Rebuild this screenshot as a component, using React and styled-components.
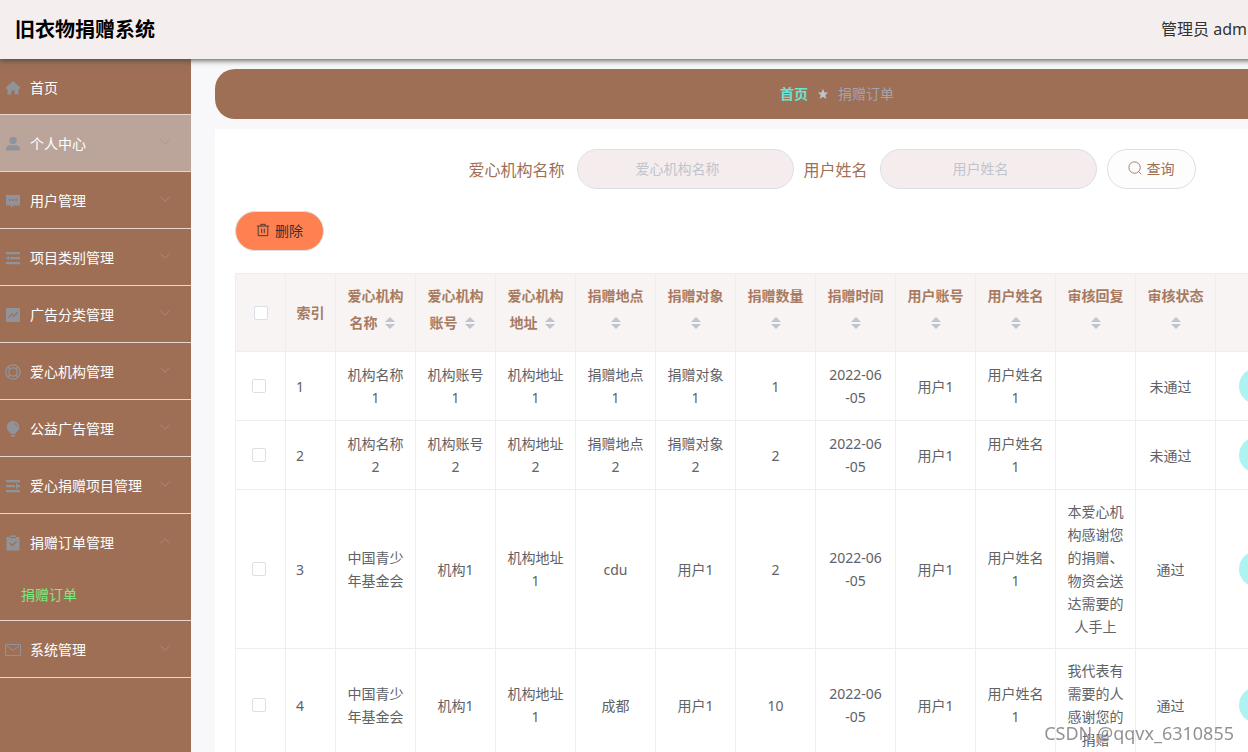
import React from 'react';
import styled, { createGlobalStyle, css } from 'styled-components';

const Global = createGlobalStyle`
  * { box-sizing: border-box; }
  html, body { margin: 0; overflow: hidden; }
  body {
    font-family: "Noto Sans", "Noto Sans CJK SC", sans-serif;
    font-size: 14px;
    color: #606266;
    background: #f8f8fa;
  }
  button, input { font: inherit; }
`;

const Page = styled.div`
  min-width: 1483px;
  height: 100vh;
  display: flex;
  flex-direction: column;
`;

const Header = styled.header`
  position: relative;
  flex: none;
  height: 59px;
  padding: 0 222px 0 15px;
  display: flex;
  align-items: center;
  justify-content: space-between;
  background: #f4eeee;
  box-shadow: 0 1px 6px #444;
`;

const Title = styled.h1`
  margin: 0;
  font-size: 20px;
  line-height: 30px;
  font-weight: 700;
  color: #000;
`;

const Account = styled.div`
  padding-bottom: 3px;
  font-size: 16px;
  color: #333;
`;

const Body = styled.div`
  flex: 1;
  min-height: 0;
  display: flex;
`;

const Sidebar = styled.nav`
  flex: none;
  width: 191px;
  background: #9e6f55;
`;

const Menu = styled.ul`
  margin: 0;
  padding: 0;
  list-style: none;
`;

const MenuItem = styled.li`
  border-bottom: 1px solid #e6d6cd;
`;

const MenuButton = styled.button`
  width: 100%;
  height: ${(p) => (p.$first ? 55 : 56)}px;
  padding: 0 20px 0 5px;
  border: 0;
  display: flex;
  align-items: center;
  gap: 9px;
  text-align: left;
  color: #fff;
  background: ${(p) => (p.$active ? '#bba59b' : 'transparent')};
  > span { flex: 1; }
  > svg:first-child { margin-top: 2px; }
  > svg:last-child { margin-bottom: 3px; }
`;

const SubLink = styled.a`
  display: block;
  height: 50px;
  line-height: 50px;
  padding-left: 21px;
  color: #7fe87f;
  text-decoration: none;
`;

const Icon = styled.svg`
  flex: none;
  display: block;
  width: ${(p) => p.$size || 16}px;
  height: ${(p) => p.$size || 16}px;
  color: ${(p) => p.$color || '#909399'};
`;

const Main = styled.main`
  flex: 1;
  min-width: 0;
  padding: 10px 24px 0;
  overflow: hidden;
`;

const Breadcrumb = styled.nav`
  height: 50px;
  padding-bottom: 2px;
  border-radius: 20px;
  display: flex;
  align-items: center;
  justify-content: center;
  gap: 9px;
  background: #9e6f55;
  color: #a2a3ad;
  > svg { margin-top: 2px; }
`;

const HomeLink = styled.a`
  font-weight: 700;
  color: #68e4d6;
  text-decoration: none;
`;

const Panel = styled.section`
  margin-top: 10px;
  padding: 20px;
  background: #fff;
`;

const SearchForm = styled.form`
  display: flex;
  align-items: center;
  justify-content: center;
  gap: 10px;
  padding-right: 10px;
`;

const Field = styled.label`
  display: flex;
  align-items: center;
  gap: 12px;
  font-size: 16px;
  color: #9e6f55;
`;

const TextInput = styled.input`
  width: 217px;
  height: 40px;
  padding: 0 30px 2px 15px;
  border: 1px solid #dcdfe6;
  border-radius: 20px;
  background: #f5eded;
  font-size: 14px;
  text-align: center;
  outline: 0;
  &::placeholder { color: #c0c4cc; }
`;

const PillButton = styled.button`
  height: 40px;
  padding: 0 20px 2px;
  border: 1px solid #dcdfe6;
  border-radius: 20px;
  display: inline-flex;
  align-items: center;
  gap: 5px;
  color: #9e6f55;
  background: #fdfdfd;
  ${(p) => p.$danger && css`
    color: #333;
    background: #ff8050;
  `}
`;

const Toolbar = styled.div`
  display: flex;
  padding: 22px 0;
`;

const Table = styled.table`
  width: 100%;
  table-layout: fixed;
  border-collapse: collapse;
  line-height: 23px;
  text-align: center;
`;

const HeadCell = styled.th`
  padding: 10px;
  border: 1px solid #ebeef5;
  background: #f7f4f3;
  color: #a77a62;
  font-weight: 700;
  word-break: break-all;
`;

const Cell = styled.td`
  height: 69px;
  padding: 10px ${(p) => p.$right || 10}px 10px 10px;
  border: 1px solid #ebeef5;
  background: #fff;
  text-align: ${(p) => p.$align || 'center'};
  white-space: pre-line;
  word-break: break-all;
`;

const Check = styled.input`
  appearance: none;
  display: block;
  width: 14px;
  height: 14px;
  margin: 0 auto;
  border: 1px solid #dcdfe6;
  border-radius: 2px;
  background: #fff;
`;

const SortButton = styled.button`
  display: inline-flex;
  flex-direction: column;
  align-items: center;
  justify-content: center;
  gap: 2px;
  width: 24px;
  height: 34px;
  padding: 0 0 2px;
  border: 0;
  background: none;
  vertical-align: middle;
  &::before, &::after {
    content: "";
    border: 5px solid transparent;
  }
  &::before { border-top: 0; border-bottom-color: #c0c4cc; }
  &::after { border-bottom: 0; border-top-color: #c0c4cc; }
`;

const RowAction = styled.button`
  display: block;
  width: 84px;
  height: 36px;
  margin-left: 13px;
  padding: 0;
  border: 0;
  border-radius: 18px;
  background: #aef3f1;
  color: #333;
`;

const Watermark = styled.div`
  position: fixed;
  right: 14px;
  bottom: 7px;
  font: 18px/24px "Noto Sans", sans-serif;
  color: rgba(110, 110, 110, 0.75);
  text-shadow: 1px 1px 1px #fff;
`;

const glyphs = {
  home: <path fill="currentColor" d="M8 1 .5 7.800l1 1.200H2.500v5.500h3.800V10.500h3.400v4h3.800V9h1l1-1.200z" />,
  user: <g fill="currentColor"><circle cx="8" cy="4.500" r="3.700" /><path d="M1.200 14.500v-2C1.200 10.500 3 9.300 5 9.300h6c2 0 3.800 1.200 3.800 3.200v2z" /></g>,
  comment: <path fill="currentColor" fillRule="evenodd" d="M1 2h14v10.500H8.500L6 15v-2.500H1zM4 6v2h1.500V6zm3.200 0v2h1.600V6zm3.300 0v2H12V6z" />,
  fold: <path fill="currentColor" d="M1 2h14v2.300H1zM5 7h10v2.200H5zM1 12h14v2.300H1zM1 8l3-2.200v4.400z" />,
  marketing: <path fill="currentColor" fillRule="evenodd" d="M2 1h12q1 0 1 1v12q0 1-1 1H2q-1 0-1-1V2q0-1 1-1zM3 10.200l1 .8 3-3 2 2 4-4.500-.8-.8L9 8.300l-2-2z" />,
  help: <g fill="none" stroke="currentColor" strokeWidth="1.300"><circle cx="8" cy="8" r="7.200" /><circle cx="8" cy="8" r="4.200" /><path d="m3 3 2.200 2.200M13 3l-2.200 2.200M3 13l2.200-2.200M13 13l-2.200-2.200" /></g>,
  bulb: <g fill="currentColor"><path d="M8 0a6.200 6.200 0 0 0-6.200 6.200c0 2.500 1.500 4.500 3.700 5.800v1h5v-1c2.200-1.300 3.700-3.300 3.700-5.800A6.200 6.200 0 0 0 8 0z" /><path d="M5.800 14h4.400v1.500H5.800z" /><path d="M9 2.500q2.500.500 3 3" fill="none" stroke="#9e6f55" /></g>,
  operation: <path fill="currentColor" d="M1 2h14v2.300H1zM1 7h9v2.200H1zM1 12h14v2.300H1zM11 5.500h1.500V7H15v2.200h-2.500v1.500H11z" />,
  claim: <path fill="currentColor" fillRule="evenodd" d="M1.500 2H5V.5h6V2h3.500v13.500h-13zM5 2v1.300h6V2zM4.300 8.500l3 3L12 7l-1-1-3.700 3.500-2-2z" />,
  message: <g fill="none" stroke="currentColor"><path d="M.5 2.500h15v11H.5z" /><path d="m2 4 6 4.500L14 4" /></g>,
  star: <path fill="currentColor" d="m8 1 2 5h5l-4 3.400 1.500 5.200L8 11.600l-4.500 3L5 9.400 1 6h5z" />,
  search: <g fill="none" stroke="currentColor"><circle cx="7.500" cy="7.500" r="6.500" /><path d="m12.200 12.200 2.800 2.800" /></g>,
  trash: <path fill="none" stroke="currentColor" d="M1 3.500h14M5.500 3.500v-2h5v2M2.500 3.500v11h11v-11M6.500 6.500v5M9.500 6.500v5" />,
  down: <path fill="none" stroke="currentColor" strokeWidth="1.300" d="m2 5 6 6 6-6" />,
  up: <path fill="none" stroke="currentColor" strokeWidth="1.300" d="m2 11 6-6 6 6" />,
};

const Glyph = ({ name, size, color }) => (
  <Icon viewBox="0 0 16 16" $size={size} $color={color} aria-hidden="true">{glyphs[name]}</Icon>
);

const menu = [
  ['首页', 'home'],
  ['个人中心', 'user'],
  ['用户管理', 'comment'],
  ['项目类别管理', 'fold'],
  ['广告分类管理', 'marketing'],
  ['爱心机构管理', 'help'],
  ['公益广告管理', 'bulb'],
  ['爱心捐赠项目管理', 'operation'],
  ['捐赠订单管理', 'claim', '捐赠订单'],
  ['系统管理', 'message'],
];

const columns = ['爱心机构名称', '爱心机构账号', '爱心机构地址', '捐赠地点', '捐赠对象', '捐赠数量', '捐赠时间', '用户账号', '用户姓名', '审核回复', '审核状态'];

const orders = [
  ['机构名称1', '机构账号1', '机构地址1', '捐赠地点1', '捐赠对象1', '1', '2022-06\n-05', '用户1', '用户姓名1', '', '未通过'],
  ['机构名称2', '机构账号2', '机构地址2', '捐赠地点2', '捐赠对象2', '2', '2022-06\n-05', '用户1', '用户姓名1', '', '未通过'],
  ['中国青少年基金会', '机构1', '机构地址1', 'cdu', '用户1', '2', '2022-06\n-05', '用户1', '用户姓名1', '本爱心机构感谢您的捐赠、物资会送达需要的人手上', '通过'],
  ['中国青少年基金会', '机构1', '机构地址1', '成都', '用户1', '10', '2022-06\n-05', '用户1', '用户姓名1', '我代表有需要的人感谢您的捐赠', '通过'],
];

export default function App() {
  return (
    <>
      <Global />
      <Page>
        <Header>
          <Title>旧衣物捐赠系统</Title>
          <Account>管理员 admin</Account>
        </Header>
        <Body>
          <Sidebar>
            <Menu>
              {menu.map(([label, icon, sub], i) => (
                <MenuItem key={label}>
                  <MenuButton type="button" $first={i === 0} $active={i === 1}>
                    <Glyph name={icon} />
                    <span>{label}</span>
                    {i > 0 && <Glyph name={sub ? 'up' : 'down'} size={12} color={i === 1 ? '#ad968c' : '#ad8b78'} />}
                  </MenuButton>
                  {sub && <SubLink href="#orders">{sub}</SubLink>}
                </MenuItem>
              ))}
            </Menu>
          </Sidebar>
          <Main>
            <Breadcrumb>
              <HomeLink href="#home">首页</HomeLink>
              <Glyph name="star" size={12} color="#c0c4cc" />
              <span>捐赠订单</span>
            </Breadcrumb>
            <Panel>
              <SearchForm>
                <Field>爱心机构名称<TextInput placeholder="爱心机构名称" /></Field>
                <Field>用户姓名<TextInput placeholder="用户姓名" /></Field>
                <PillButton type="button"><Glyph name="search" size={14} color="inherit" />查询</PillButton>
              </SearchForm>
              <Toolbar>
                <PillButton type="button" $danger><Glyph name="trash" size={14} color="inherit" />删除</PillButton>
              </Toolbar>
              <Table>
                <colgroup>
                  <col width="50" />
                  <col width="50" />
                  {columns.map((c) => <col key={c} width="80" />)}
                  <col />
                </colgroup>
                <thead>
                  <tr>
                    <HeadCell><Check type="checkbox" aria-label="全选" /></HeadCell>
                    <HeadCell>索引</HeadCell>
                    {columns.map((c) => (
                      <HeadCell key={c}>{c}<SortButton type="button" aria-label={c} /></HeadCell>
                    ))}
                    <HeadCell />
                  </tr>
                </thead>
                <tbody>
                  {orders.map((row, i) => (
                    <tr key={i}>
                      <Cell $right={14}><Check type="checkbox" aria-label={`${i + 1}`} /></Cell>
                      <Cell $align="left">{i + 1}</Cell>
                      {row.map((value, j) => (
                        <Cell key={columns[j]} $right={j === 10 ? 20 : 10}>{value}</Cell>
                      ))}
                      <Cell><RowAction type="button" aria-label="详情" /></Cell>
                    </tr>
                  ))}
                </tbody>
              </Table>
            </Panel>
          </Main>
        </Body>
      </Page>
      <Watermark>CSDN @qqvx_6310855</Watermark>
    </>
  );
}
